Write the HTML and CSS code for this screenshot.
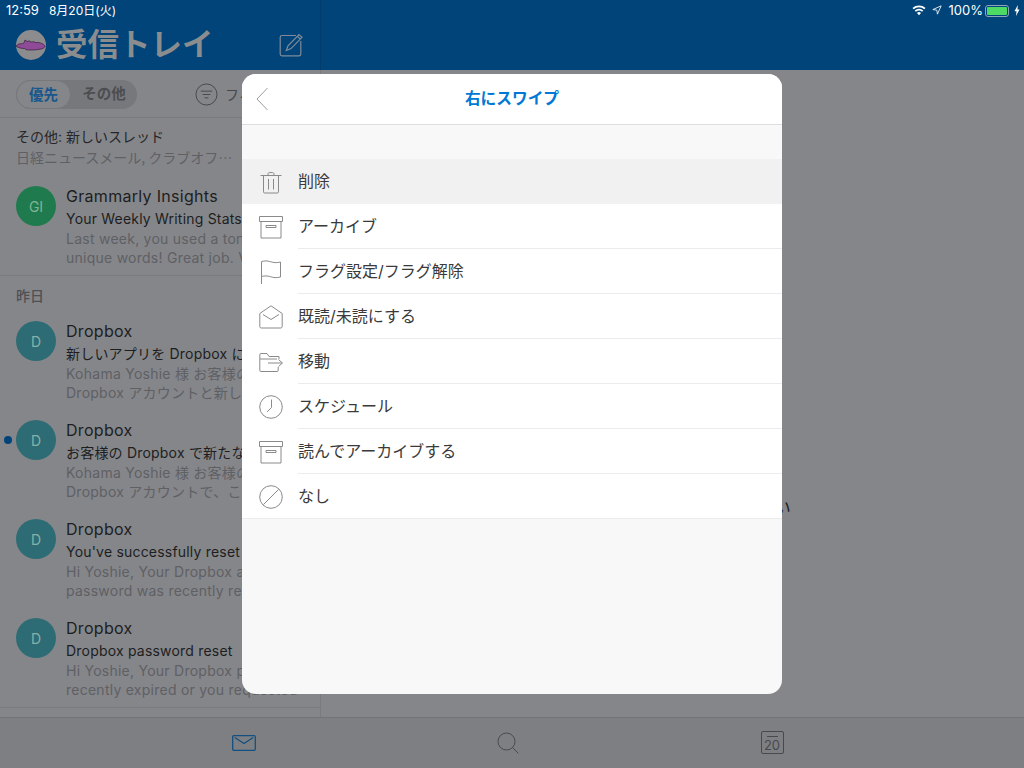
FILE: index.html
```html
<!DOCTYPE html>
<html lang="ja">
<head>
<meta charset="utf-8">
<title>受信トレイ</title>
<link rel="stylesheet" href="styles.css">
</head>
<body>
<div class="app">
  <div class="main">
    <aside class="sidebar">
      <header class="head">
        <div class="status-left"><span>12:59</span><span>8月20日(火)</span></div>
        <div class="titlebar">
          <svg class="me" viewBox="0 0 30 30"><circle cx="15" cy="15" r="15" fill="#8c8c8e"/><path d="M1 15.500c.5-1.500 3-1.800 5.500-1.800L8 12.800l1-2.800 2.500 1.500 2-.7 1 1.200 3.500-.2 2 1 1.500-.5 3 .7c2.500.8 4 1.800 4.500 3.200-.5 1.800-2.500 2.700-5 3-5 .9-10 1.100-14 .5l-1.500-1.200c-3 0-6-.6-8.500-2.500z" fill="#8f4a98" stroke="#35203a" stroke-width=".7"/></svg>
          <h1 class="title">受信トレイ</h1>
          <svg class="compose" viewBox="0 0 24 24" fill="none" stroke="#7f8b98" stroke-width="1.200"><path d="M17 2.500H3a1.800 1.800 0 0 0-1.800 1.800V21a1.800 1.800 0 0 0 1.800 1.800h17a1.800 1.800 0 0 0 1.800-1.800V8"/><path d="M7.300 17.500 9 12.800 20 1.500l3 2.800-11 11.300zM18.300 3.300l3 2.800"/></svg>
        </div>
      </header>
      <div class="list">
        <div class="filters">
          <div class="pill"><span class="pill-on">優先</span><span class="pill-off">その他</span></div>
          <div class="filter">
            <svg class="filter-ico" viewBox="0 0 24 24" fill="none" stroke="#46474a" stroke-width="1"><circle cx="12" cy="12" r="11"/><path d="M6 8.500h12M8 12h8M10 15.500h4"/></svg>
            <span>フィルター</span>
          </div>
        </div>
        <div class="other">
          <div class="other-a">その他: 新しいスレッド</div>
          <div class="other-b">日経ニュースメール, クラブオフ⋯</div>
        </div>
        <article class="mail sep">
          <div class="avatar green">GI</div>
          <div class="body">
            <div class="name">Grammarly Insights</div>
            <div class="subject">Your Weekly Writing Stats and Tips</div>
            <div class="preview">Last week, you used a ton of</div>
            <div class="preview">unique words! Great job. Visit</div>
          </div>
        </article>
        <div class="day">昨日</div>
        <article class="mail">
          <div class="avatar teal">D</div>
          <div class="body">
            <div class="name">Dropbox</div>
            <div class="subject">新しいアプリを Dropbox に接続</div>
            <div class="preview">Kohama Yoshie 様 お客様の</div>
            <div class="preview">Dropbox アカウントと新しいアプリ</div>
          </div>
        </article>
        <article class="mail">
          <span class="unread"></span>
          <div class="avatar teal">D</div>
          <div class="body">
            <div class="name">Dropbox</div>
            <div class="subject">お客様の Dropbox で新たなログイン</div>
            <div class="preview">Kohama Yoshie 様 お客様の</div>
            <div class="preview">Dropbox アカウントで、このたび</div>
          </div>
        </article>
        <article class="mail">
          <div class="avatar teal">D</div>
          <div class="body">
            <div class="name">Dropbox</div>
            <div class="subject">You've successfully reset your</div>
            <div class="preview">Hi Yoshie, Your Dropbox account</div>
            <div class="preview">password was recently reset</div>
          </div>
        </article>
        <article class="mail sep">
          <div class="avatar teal">D</div>
          <div class="body">
            <div class="name">Dropbox</div>
            <div class="subject">Dropbox password reset</div>
            <div class="preview">Hi Yoshie, Your Dropbox password</div>
            <div class="preview">recently expired or you requested</div>
          </div>
        </article>
      </div>
    </aside>
    <section class="detail">
      <div class="detail-head">
        <svg class="wifi" viewBox="0 0 16 12" fill="#fff"><path d="M8 11.500 5.700 8.800a3.500 3.500 0 0 1 4.600 0zM4.500 7.500 3.100 5.900a7.500 7.500 0 0 1 9.800 0l-1.400 1.600a5.400 5.400 0 0 0-7 0zM2 4.600.5 3a11.300 11.300 0 0 1 15 0L14 4.600a9.200 9.200 0 0 0-12 0z"/></svg>
        <svg class="loc" viewBox="0 0 12 12" fill="none" stroke="#fff" stroke-width="1"><path d="M11 1 1 5.500l4.800.7.700 4.800z"/></svg>
        <span class="pct">100%</span>
        <span class="battery"><span class="battery-fill"></span></span>
        <svg class="bolt" viewBox="0 0 6 11" fill="#fff"><path d="M3.800 0 .5 6.200h2L2 11l3.500-6.500h-2z"/></svg>
      </div>
      <p class="detail-msg">メッセージを選択してください</p>
    </section>
  </div>
  <nav class="tabs">
    <div class="tab">
      <svg class="tab-mail" viewBox="0 0 24 16" fill="none" stroke="#13507f" stroke-width="1.300"><rect x=".7" y=".7" width="22.600" height="14.600" rx="1.200"/><path d="m2.800 2.500 9.200 6 9.200-6"/></svg>
    </div>
    <div class="tab">
      <svg class="tab-search" viewBox="0 0 22 22" fill="none" stroke="#48494c" stroke-width="1"><circle cx="9.500" cy="9.500" r="8.500"/><path d="m15.800 15.800 5.500 5.500"/></svg>
    </div>
    <div class="tab">
      <span class="tab-cal">20</span>
    </div>
  </nav>
  <div class="modal">
    <div class="modal-head">
      <svg class="back" viewBox="0 0 12 24" fill="none" stroke="#9c9c9c" stroke-width="1"><path d="M11.500 1 1 12l10.500 11"/></svg>
      <h2 class="modal-title">右にスワイプ</h2>
    </div>
    <ul class="opts">
      <li class="opt active">
        <svg class="ico" viewBox="0 0 24 24" fill="none" stroke="#8a8a8a" stroke-width="1"><path d="M1.500 5.500h21M9 5.500V3.800C9 2.800 10 2.500 12 2.500s3 .3 3 1.300v1.700M4.500 5.500v16.300a1.200 1.200 0 0 0 1.200 1.200h12.600a1.200 1.200 0 0 0 1.200-1.200V5.500M9.500 9v10.500M14.500 9v10.500"/></svg>
        <span class="opt-label">削除</span>
      </li>
      <li class="opt">
        <svg class="ico" viewBox="0 0 24 24" fill="none" stroke="#8a8a8a" stroke-width="1"><path d="M.5 1.500h23v5H.5zM2 6.500v16.500h20V6.500M7 10.500h10v2H7z"/></svg>
        <span class="opt-label">アーカイブ</span>
      </li>
      <li class="opt">
        <svg class="ico" viewBox="0 0 24 24" fill="none" stroke="#8a8a8a" stroke-width="1"><path d="M2.500 24V1.500c3-.8 6-.8 9 .2s6 1.300 10 .3v15c-4 1-7 .7-10-.3s-6-1-9-.2"/></svg>
        <span class="opt-label">フラグ設定/フラグ解除</span>
      </li>
      <li class="opt">
        <svg class="ico" viewBox="0 0 24 24" fill="none" stroke="#8a8a8a" stroke-width="1"><path d="M.8 8.500 12 .8l11.200 7.700v13a1.500 1.500 0 0 1-1.500 1.500H2.300a1.500 1.500 0 0 1-1.500-1.500zM4 9.500l8 5 8-5"/></svg>
        <span class="opt-label">既読/未読にする</span>
      </li>
      <li class="opt">
        <svg class="ico" viewBox="0 0 24 24" fill="none" stroke="#8a8a8a" stroke-width="1"><path d="M20 9V6.500H10L8 3.500H2a1.200 1.200 0 0 0-1.200 1.200v15.600A1.200 1.200 0 0 0 2 21.500h16a1.200 1.200 0 0 0 1.200-1.200V17M1 9h17M9 13h14M19.500 9.500 23.500 13l-4 3.500"/></svg>
        <span class="opt-label">移動</span>
      </li>
      <li class="opt">
        <svg class="ico" viewBox="0 0 24 24" fill="none" stroke="#8a8a8a" stroke-width="1"><circle cx="12" cy="12" r="11.300"/><path d="M12.500 4.500V12.500L8 17"/></svg>
        <span class="opt-label">スケジュール</span>
      </li>
      <li class="opt">
        <svg class="ico" viewBox="0 0 24 24" fill="none" stroke="#8a8a8a" stroke-width="1"><path d="M.5 1.500h23v5H.5zM2 6.500v16.500h20V6.500M7 10.500h10v2H7z"/></svg>
        <span class="opt-label">読んでアーカイブする</span>
      </li>
      <li class="opt last">
        <svg class="ico" viewBox="0 0 24 24" fill="none" stroke="#8a8a8a" stroke-width="1"><circle cx="12" cy="12" r="11.300"/><path d="M4.500 19.500 19.500 4.500"/></svg>
        <span class="opt-label">なし</span>
      </li>
    </ul>
  </div>
</div>
</body>
</html>
```
FILE: styles.css
```css
* { box-sizing: border-box; }
html, body { margin: 0; padding: 0; }
body {
  width: 1024px;
  height: 768px;
  overflow: hidden;
  font-family: Inter, "Noto Sans CJK JP", sans-serif;
  background: #85868a;
}
h1, h2, p, ul { margin: 0; padding: 0; }
ul { list-style: none; }
.app { position: relative; width: 1024px; height: 768px; display: flex; flex-direction: column; }
.main { display: flex; height: 717px; }

.sidebar { width: 321px; overflow: hidden; flex: none; display: flex; flex-direction: column; }
.head { height: 70px; background: #00447a; border-right: 1px solid #003d6e; display: flex; flex-direction: column; flex: none; }
.list { flex: 1; border-right: 1px solid #7a7b7f; overflow: hidden; }
.status-left { height: 20px; display: flex; gap: 10px; padding: 3px 0 0 6px; font-size: 12px; line-height: 15px; color: #fff; white-space: nowrap; }
.status-left span:first-child { font-size: 13px; }
.titlebar { display: flex; align-items: center; height: 50px; padding: 0 17px 0 16px; }
.me { width: 30px; height: 30px; flex: none; }
.title { font-size: 31.500px; line-height: 48px; font-weight: 700; color: #8b8c8e; margin-left: 10px; flex: 1; white-space: nowrap; }
.compose { width: 24px; height: 24px; flex: none; }

.filters { height: 48px; display: flex; align-items: center; padding: 1px 0 0 16px; border-bottom: 1px solid #7a7b7f; }
.pill { display: flex; width: 121px; height: 29px; border-radius: 15px; background: #77787c; font-size: 14.500px; font-weight: 700; line-height: 27px; }
.pill-on { width: 55px; border: 1px solid #77787c; border-radius: 15px; background: #85868a; color: #17578c; text-align: center; }
.pill-off { flex: 1; color: #4c4d50; text-align: center; }
.filter { display: flex; align-items: center; gap: 7px; margin-left: 58px; color: #46474a; font-size: 14px; white-space: nowrap; }
.filter-ico { width: 23px; height: 23px; flex: none; }

.other { height: 58px; padding: 9px 0 0 16px; white-space: nowrap; }
.other-a { font-size: 14px; line-height: 20px; color: #252629; }
.other-b { font-family: "Noto Sans CJK JP", sans-serif; font-size: 14px; line-height: 20px; color: #5f6064; }

.mail { position: relative; display: flex; height: 99px; padding: 10px 0 0 16px; white-space: nowrap; }
.mail.sep { height: 100px; border-bottom: 1px solid #7a7b7f; }
.avatar { width: 40px; height: 40px; border-radius: 50%; flex: none; display: flex; align-items: center; justify-content: center; font-size: 14px; color: #87b0a8; }
.green { background: #1f7a4d; color: #82b496; }
.teal { background: #2d6c75; }
.body { margin: -1px 0 0 10px; overflow: hidden; }
.name { font-size: 16px; line-height: 23px; letter-spacing: .3px; color: #1d1e21; }
.subject { font-size: 14px; line-height: 21px; letter-spacing: .2px; color: #1d1e21; }
.preview { font-size: 14px; line-height: 19px; letter-spacing: .25px; color: #5f6064; }
.unread { position: absolute; left: 4px; top: 26px; width: 8px; height: 8px; border-radius: 50%; background: #00447a; }
.day { height: 35px; padding: 11px 0 0 16px; font-size: 14px; line-height: 18px; font-weight: 500; color: #4f5054; }

.detail { flex: 1; min-width: 0; }
.detail-head { height: 70px; background: #00447a; display: flex; align-items: flex-start; justify-content: flex-end; padding: 3px 4px 0 0; color: #fff; font-size: 13px; line-height: 15px; }
.wifi { width: 14px; height: 11px; margin-top: 2px; }
.loc { width: 10px; height: 10px; margin: 2px 0 0 6px; }
.pct { margin-left: 7px; }
.battery { width: 24px; height: 12px; margin: 2px 0 0 2px; border: 1px solid #8ea6bb; border-radius: 3px; padding: 1px; display: flex; }
.battery-fill { flex: 1; background: #4cd964; border-radius: 1px; }
.bolt { width: 6px; height: 11px; margin: 2px 0 0 5px; }
.detail-msg { margin-top: 426px; text-align: center; font-size: 17px; line-height: 24px; color: #1d1e21; white-space: nowrap; }

.tabs { flex: 1; display: grid; grid-template-columns: repeat(3, 264px); padding: 0 120px 0 112px; background: #7e7f83; border-top: 1px solid #737478; }
.tab { display: flex; align-items: center; justify-content: center; padding-bottom: 1px; }
.tab-mail { width: 24px; height: 16px; }
.tab-search { width: 22px; height: 22px; }
.tab-cal { width: 23px; height: 23px; border: 1px solid #48494c; border-radius: 2px; font-size: 13px; line-height: 13px; padding-top: 7px; text-align: center; color: #48494c; position: relative; }
.tab-cal::before { content: ""; position: absolute; left: 5px; right: 5px; top: 4px; height: 1px; background: #48494c; }

.modal { position: absolute; left: 242px; top: 74px; width: 540px; height: 620px; border-radius: 14px; background: #f8f8f8; overflow: hidden; }
.modal-head { position: relative; height: 51px; background: #fff; border-bottom: 1px solid #dedede; display: flex; align-items: center; justify-content: center; }
.back { position: absolute; left: 14px; top: 13px; width: 12px; height: 24px; }
.modal-title { font-size: 15.700px; font-weight: 700; line-height: 48px; color: #0078d4; }
.opts { margin-top: 34px; }
.opt { position: relative; display: flex; align-items: center; height: 45px; background: #fff; padding-left: 17px; }
.ico { width: 24px; height: 24px; flex: none; }
.opt-label { flex: 1; align-self: stretch; margin-left: 15px; font-size: 16px; line-height: 44px; color: #3a3a3a; border-bottom: 1px solid #ececec; }
.active { background: #f1f1f1; }
.active .opt-label { border-bottom-color: transparent; }
.last::after { content: ""; position: absolute; left: 0; right: 0; bottom: 0; height: 1px; background: #ececec; }
```
